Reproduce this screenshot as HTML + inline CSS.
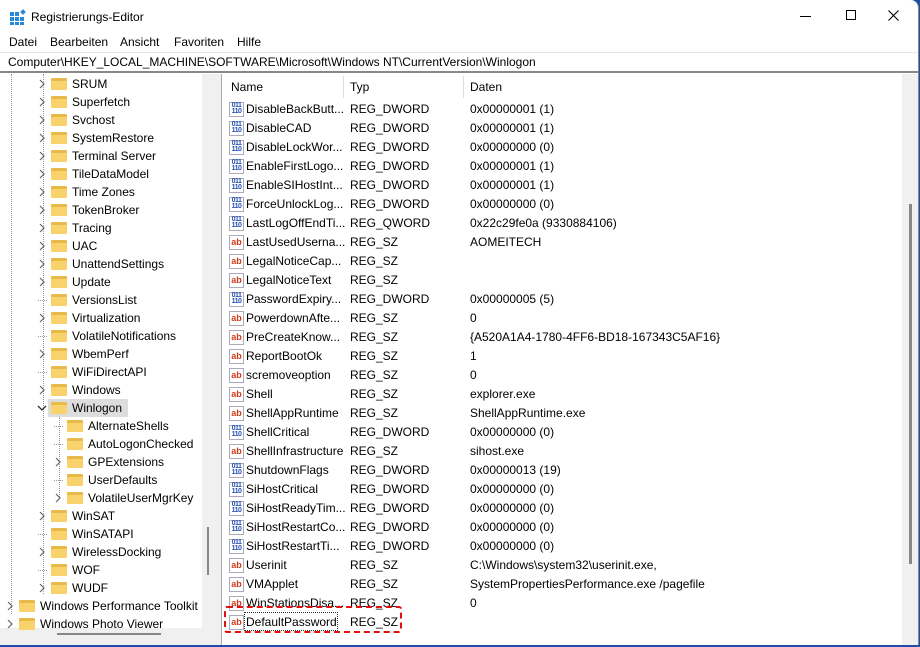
<!DOCTYPE html>
<html><head><meta charset="utf-8"><style>
*{margin:0;padding:0;box-sizing:border-box}
body{width:920px;height:647px;overflow:hidden;background:#1e4fa8;font-family:"Liberation Sans",sans-serif;font-size:12px;color:#000;position:relative}
.win{position:absolute;left:0;top:0;width:919px;height:645px;background:#fff;border-radius:0 8px 0 0;border-right:1px solid #888;overflow:hidden}
.a{position:absolute;white-space:nowrap}
.tr{position:absolute;height:18px;line-height:18px;white-space:nowrap}
.fold{position:absolute;width:16px;height:12px;background:#f8d26a;border-top:3px solid #e9b94a;border-radius:1px}
.chev{position:absolute}
.row{position:absolute;left:226px;height:19px;line-height:19px;white-space:nowrap}
.ic{position:absolute;left:3px;top:2px;width:15px;height:15px;border:1px solid #aab;background:#fff;font-size:9px;font-weight:bold;line-height:12px;text-align:center}
.sz{color:#d03a1a}
.dw{color:#2350b0;font-size:7px;line-height:6px;letter-spacing:-0.5px}
</style></head><body>
<div class="win">
<svg class="a" style="left:10px;top:9px" width="16" height="16"><g fill="#2a87d6"><rect x="0" y="3" width="4" height="4"/><rect x="5" y="3" width="4" height="4"/><rect x="0" y="8" width="4" height="4"/><rect x="5" y="8" width="4" height="4"/><rect x="10" y="8" width="4" height="4"/><rect x="0" y="13" width="4" height="3"/><rect x="5" y="13" width="4" height="3"/><rect x="10" y="13" width="4" height="3"/><rect x="11" y="1" width="4" height="4" transform="rotate(45 13 3)"/></g></svg>
<div class="a" style="left:31px;top:10px;font-size:12px">Registrierungs-Editor</div>
<div class="a" style="left:800px;top:16px;width:11px;height:1px;background:#000"></div>
<div class="a" style="left:846px;top:10px;width:10px;height:10px;border:1px solid #000"></div>
<svg class="a" style="left:888px;top:10px" width="11" height="11"><path d="M0.5 0.5L10.5 10.5M10.5 0.5L0.5 10.5" stroke="#000" stroke-width="1.1"/></svg>
<div class="a" style="left:9px;top:35px">Datei</div>
<div class="a" style="left:50px;top:35px">Bearbeiten</div>
<div class="a" style="left:120px;top:35px">Ansicht</div>
<div class="a" style="left:174px;top:35px">Favoriten</div>
<div class="a" style="left:237px;top:35px">Hilfe</div>
<div class="a" style="left:0;top:52px;width:920px;height:21px;border-top:1px solid #e5e5e5;border-bottom:2px solid #888"></div>
<div class="a" style="left:8px;top:55px">Computer\HKEY_LOCAL_MACHINE\SOFTWARE\Microsoft\Windows NT\CurrentVersion\Winlogon</div>
<div class="a" style="left:0;top:74px;width:218px;height:573px;background:#fff"></div>
<div class="a" style="left:202px;top:74px;width:16px;height:556px;background:#f0f0f0"></div>
<div class="a" style="left:207px;top:527px;width:2px;height:48px;background:#888"></div>
<div class="a" style="left:0;top:628px;width:218px;height:19px;background:#f0f0f0"></div>
<div class="a" style="left:57px;top:633px;width:104px;height:2px;background:#888"></div>
<div class="a" style="left:11px;top:74px;height:540px;border-left:1px dotted #999"></div>
<div class="a" style="left:43px;top:74px;height:520px;border-left:1px dotted #999"></div>
<div class="a" style="left:59px;top:417px;height:82px;border-left:1px dotted #999"></div>
<div class="a" style="left:218px;top:74px;width:4px;height:573px;background:#f0f0f0;border-right:1px solid #aaa"></div>
<div class="a" style="left:48px;top:399px;width:80px;height:18px;background:#ddd"></div>
<div id="tree"></div>
<div class="a" style="left:223px;top:74px;width:696px;height:573px;background:#fff"></div>
<div class="a" style="left:343px;top:76px;width:1px;height:22px;background:#ddd"></div>
<div class="a" style="left:463px;top:76px;width:1px;height:22px;background:#ddd"></div>
<div class="a" style="left:231px;top:80px">Name</div>
<div class="a" style="left:350px;top:80px">Typ</div>
<div class="a" style="left:470px;top:80px">Daten</div>
<div class="a" style="left:902px;top:74px;width:17px;height:573px;background:#f0f0f0"></div>
<div class="a" style="left:909px;top:204px;width:3px;height:360px;background:#888"></div>
<div id="rows"></div>
<div class="a" style="left:224px;top:606px;width:178px;height:27px;border:2.5px dashed #e01010;border-radius:3px"></div>
<div class="a" style="left:244px;top:612px;width:94px;height:19px;border:1px dotted #333"></div>
</div>
<script>
var t=[["SRUM",2,1],["Superfetch",2,1],["Svchost",2,1],["SystemRestore",2,1],["Terminal Server",2,1],["TileDataModel",2,1],["Time Zones",2,1],["TokenBroker",2,1],["Tracing",2,1],["UAC",2,1],["UnattendSettings",2,1],["Update",2,1],["VersionsList",2,0],["Virtualization",2,1],["VolatileNotifications",2,0],["WbemPerf",2,1],["WiFiDirectAPI",2,0],["Windows",2,1],["Winlogon",2,2],["AlternateShells",3,0],["AutoLogonChecked",3,0],["GPExtensions",3,1],["UserDefaults",3,0],["VolatileUserMgrKey",3,1],["WinSAT",2,1],["WinSATAPI",2,0],["WirelessDocking",2,1],["WOF",2,0],["WUDF",2,1],["Windows Performance Toolkit",1,1],["Windows Photo Viewer",1,1]];
var h="";t.forEach(function(r,i){var y=75+i*18;var fx={1:19,2:51,3:67}[r[1]];var cx=fx-12;
if(r[2]==1)h+='<svg class="chev" style="left:'+cx+'px;top:'+(y+4)+'px" width="6" height="10"><path d="M1 1L5 5L1 9" fill="none" stroke="#666" stroke-width="1.2"/></svg>';
if(r[2]==2)h+='<svg class="chev" style="left:'+(cx-2)+'px;top:'+(y+6)+'px" width="10" height="6"><path d="M1 1L5 5L9 1" fill="none" stroke="#333" stroke-width="1.3"/></svg>';
if(r[2]==0)h+='<div class="a" style="left:'+(cx-1)+'px;top:'+(y+9)+'px;width:9px;border-top:1px dotted #999"></div>';
h+='<div class="fold" style="left:'+fx+'px;top:'+(y+3)+'px"></div><div class="tr" style="left:'+(fx+21)+'px;top:'+y+'px">'+r[0]+'</div>';});
document.getElementById("tree").innerHTML=h;
var R=[["DisableBackButt...","REG_DWORD","0x00000001 (1)"],["DisableCAD","REG_DWORD","0x00000001 (1)"],["DisableLockWor...","REG_DWORD","0x00000000 (0)"],["EnableFirstLogo...","REG_DWORD","0x00000001 (1)"],["EnableSIHostInt...","REG_DWORD","0x00000001 (1)"],["ForceUnlockLog...","REG_DWORD","0x00000000 (0)"],["LastLogOffEndTi...","REG_QWORD","0x22c29fe0a (9330884106)"],["LastUsedUserna...","REG_SZ","AOMEITECH"],["LegalNoticeCap...","REG_SZ",""],["LegalNoticeText","REG_SZ",""],["PasswordExpiry...","REG_DWORD","0x00000005 (5)"],["PowerdownAfte...","REG_SZ","0"],["PreCreateKnow...","REG_SZ","{A520A1A4-1780-4FF6-BD18-167343C5AF16}"],["ReportBootOk","REG_SZ","1"],["scremoveoption","REG_SZ","0"],["Shell","REG_SZ","explorer.exe"],["ShellAppRuntime","REG_SZ","ShellAppRuntime.exe"],["ShellCritical","REG_DWORD","0x00000000 (0)"],["ShellInfrastructure","REG_SZ","sihost.exe"],["ShutdownFlags","REG_DWORD","0x00000013 (19)"],["SiHostCritical","REG_DWORD","0x00000000 (0)"],["SiHostReadyTim...","REG_DWORD","0x00000000 (0)"],["SiHostRestartCo...","REG_DWORD","0x00000000 (0)"],["SiHostRestartTi...","REG_DWORD","0x00000000 (0)"],["Userinit","REG_SZ","C:\\Windows\\system32\\userinit.exe,"],["VMApplet","REG_SZ","SystemPropertiesPerformance.exe /pagefile"],["WinStationsDisa...","REG_SZ","0"],["DefaultPassword","REG_SZ",""]];
var g="";R.forEach(function(r,i){var y=100+i*19;var sz=r[1]=="REG_SZ";
g+='<div class="row" style="top:'+y+'px;width:680px"><div class="ic '+(sz?'sz':'dw')+'">'+(sz?'ab':'011<br>110')+'</div><span class="a" style="left:20px">'+r[0]+'</span><span class="a" style="left:124px">'+r[1]+'</span><span class="a" style="left:244px">'+r[2]+'</span></div>';});
document.getElementById("rows").innerHTML=g;
</script>
</body></html>
